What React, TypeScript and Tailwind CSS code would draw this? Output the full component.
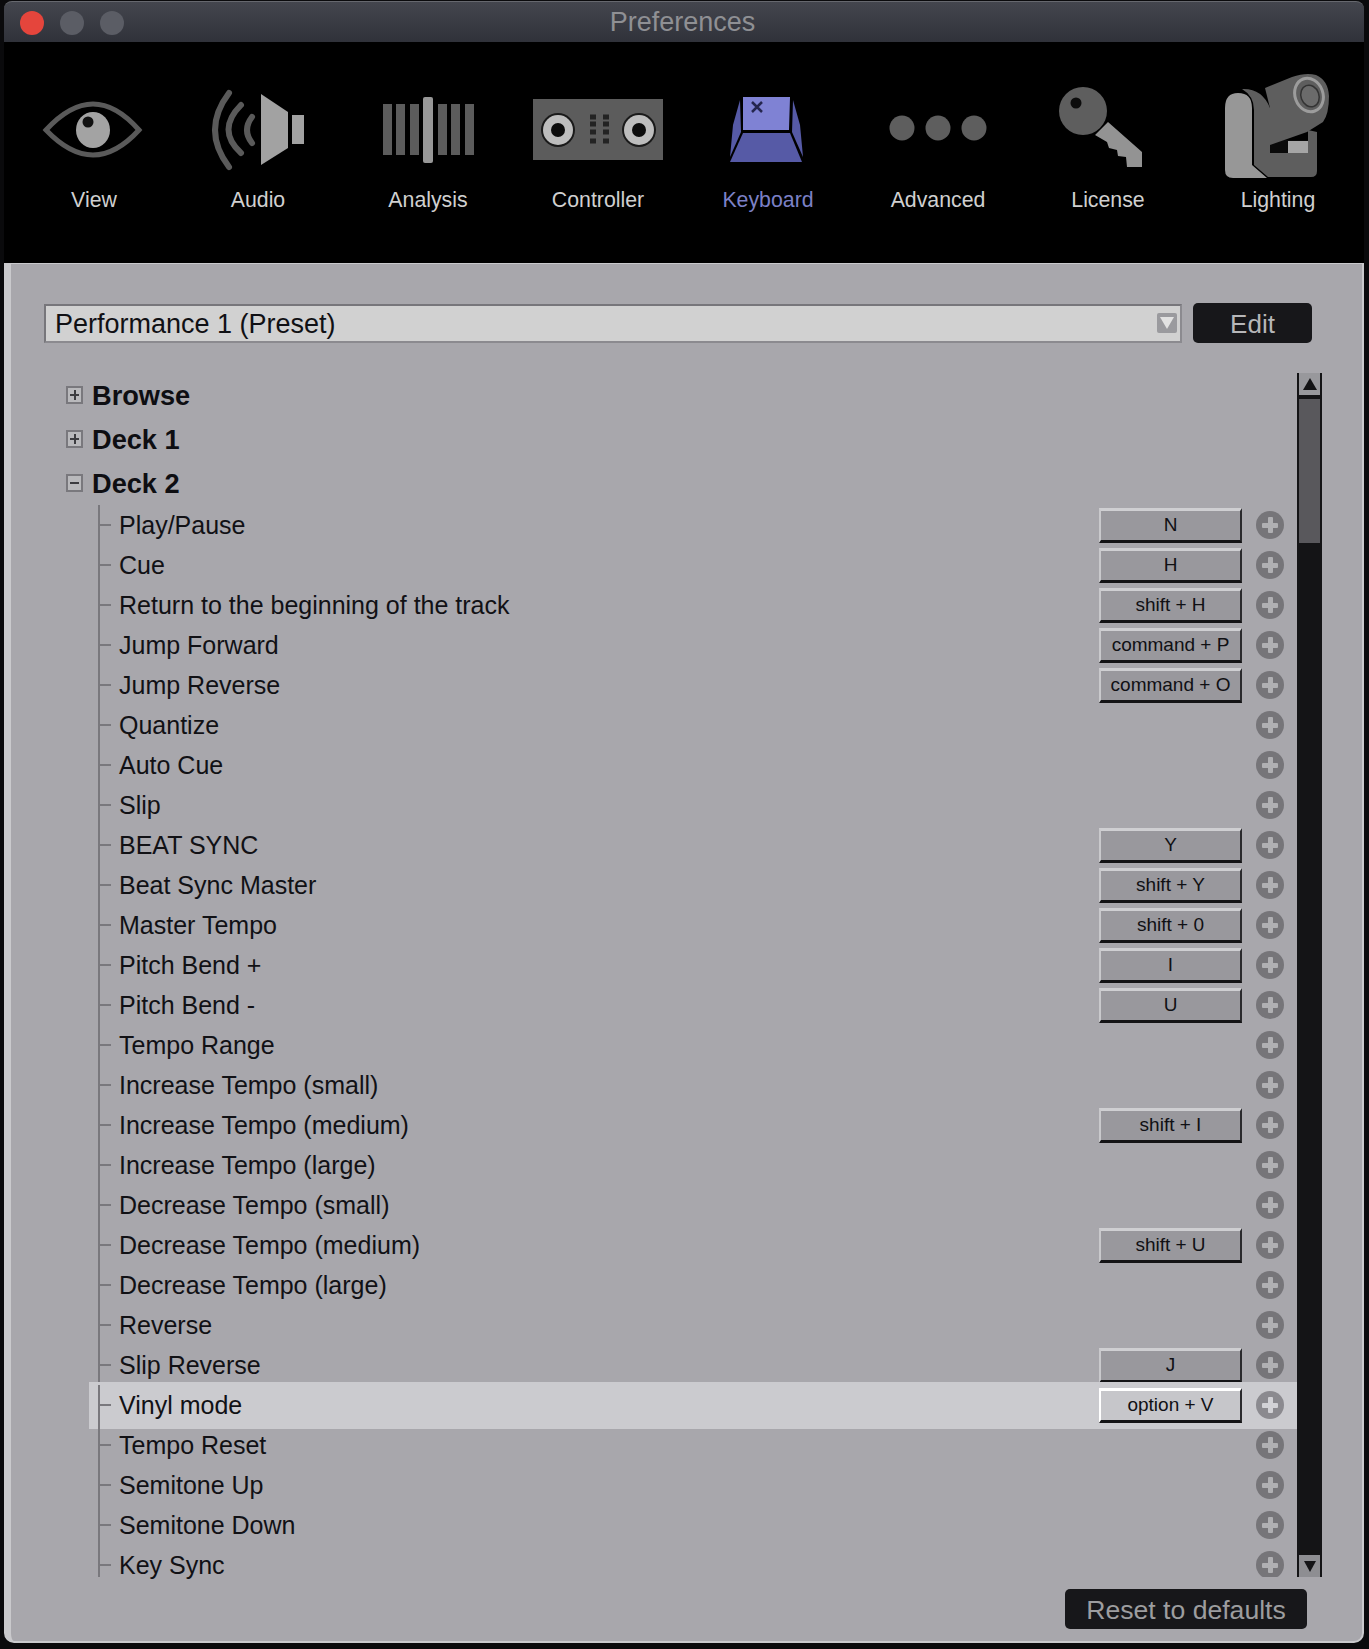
import type { ReactNode } from "react";

interface NavItem {
  label: string;
  active?: boolean;
  icon: ReactNode;
}

const navItems: NavItem[] = [
  {
    label: "View",
    icon: (
      <>
        <path d="M46 130 Q70 104 93 104 Q116 104 139 130 Q116 155 93 155 Q70 155 46 130 Z" fill="none" stroke="#5a5a5a" strokeWidth="5" />
        <ellipse cx="93" cy="130" rx="17" ry="18" fill="#a3a3a3" />
        <circle cx="88" cy="122" r="5.5" fill="#111" />
      </>
    ),
  },
  {
    label: "Audio",
    icon: (
      <>
        <path d="M229 93 Q201 130 229 167" fill="none" stroke="#5a5a5a" strokeWidth="6" strokeLinecap="round" />
        <path d="M241 105 Q216 130 241 153" fill="none" stroke="#5a5a5a" strokeWidth="6" strokeLinecap="round" />
        <path d="M252 117 Q242 130 252 143" fill="none" stroke="#5a5a5a" strokeWidth="6" strokeLinecap="round" />
        <path d="M261 94 L288 112 L288 148 L261 165 Z" fill="#a2a2a2" />
        <rect x="292" y="115" width="12" height="29" fill="#a2a2a2" />
      </>
    ),
  },
  {
    label: "Analysis",
    icon: (
      <>
        {[383, 396, 410, 438, 451, 465].map((x) => (
          <rect key={x} x={x} y="104" width="9" height="51" fill="#5c5c5c" />
        ))}
        <rect x="423" y="97" width="10" height="66" rx="2" fill="#979797" />
      </>
    ),
  },
  {
    label: "Controller",
    icon: (
      <>
        <rect x="533" y="99" width="130" height="61" fill="#5c5c5c" />
        {[558, 639].map((x) => (
          <g key={x}>
            <circle cx={x} cy="130" r="17" fill="#1a1a1a" />
            <circle cx={x} cy="130" r="15" fill="#bdbdbd" />
            <circle cx={x} cy="130" r="7" fill="#0c0c0c" />
          </g>
        ))}
        {[593, 606].map((x) =>
          [117, 124, 132, 141].map((y) => <rect key={`${x}-${y}`} x={x - 3} y={y - 2.5} width="6" height="5" fill="#232323" />),
        )}
      </>
    ),
  },
  {
    label: "Keyboard",
    active: true,
    icon: (
      <>
        <path d="M743 97 H790 L789 130 H743 Z" fill="#7f82d4" />
        <path d="M743 133 H790 L802 162 H730 Z" fill="#565aa6" />
        <path d="M740 100 L741 132 L730 157 L733 125 Z" fill="#565aa6" />
        <path d="M793 100 L792 132 L803 157 L800 125 Z" fill="#565aa6" />
        <path d="M752 102 L762 112 M762 102 L752 112" stroke="#25264f" strokeWidth="2.5" />
      </>
    ),
  },
  {
    label: "Advanced",
    icon: (
      <>
        <circle cx="902" cy="128" r="12.5" fill="#5e5e5e" />
        <circle cx="938" cy="128" r="12.5" fill="#5e5e5e" />
        <circle cx="974" cy="128" r="12.5" fill="#5e5e5e" />
      </>
    ),
  },
  {
    label: "License",
    icon: (
      <>
        <path d="M1108 122 L1142 152 V167 H1127 L1126 157 L1118 156 L1117 150 L1109 148 L1107 142 L1095 135 Z" fill="#939393" />
        <circle cx="1083" cy="111" r="24" fill="#5e5e5e" />
        <circle cx="1076" cy="103" r="5.5" fill="#0c0c0c" />
      </>
    ),
  },
  {
    label: "Lighting",
    icon: (
      <>
        <path d="M1225 108 Q1225 93 1238 93 Q1252 93 1252 108 V165 L1267 178 H1233 Q1225 178 1225 170 Z" fill="#979797" />
        <rect x="1270" y="140" width="38" height="14" fill="#0a0a0a" />
        <rect x="1288" y="141" width="20" height="12" fill="#a5a5a5" />
        <path d="M1242 89 Q1262 88 1270 108 V153 H1308 V130 L1317 132 V171 Q1317 177 1311 177 H1268 L1254 165 V110 Q1254 96 1242 89 Z" fill="#5e5e5e" />
        <path d="M1265 88 L1292 77 Q1306 72 1316 75 Q1328 80 1329 96 Q1329 114 1323 122 L1307 132 L1270 145 V108 Z" fill="#5e5e5e" />
        <ellipse cx="1309" cy="95" rx="14" ry="17" transform="rotate(-20 1309 95)" fill="#5e5e5e" stroke="#9c9c9c" strokeWidth="3" />
        <ellipse cx="1310" cy="96" rx="9" ry="11" transform="rotate(-20 1310 96)" fill="#6b6b6b" stroke="#333" strokeWidth="1.5" />
      </>
    ),
  },
];

const deckRows: { label: string; shortcut?: string; selected?: boolean; clipped?: boolean }[] = [
  { label: "Play/Pause", shortcut: "N" },
  { label: "Cue", shortcut: "H" },
  { label: "Return to the beginning of the track", shortcut: "shift + H" },
  { label: "Jump Forward", shortcut: "command + P" },
  { label: "Jump Reverse", shortcut: "command + O" },
  { label: "Quantize" },
  { label: "Auto Cue" },
  { label: "Slip" },
  { label: "BEAT SYNC", shortcut: "Y" },
  { label: "Beat Sync Master", shortcut: "shift + Y" },
  { label: "Master Tempo", shortcut: "shift + 0" },
  { label: "Pitch Bend +", shortcut: "I" },
  { label: "Pitch Bend -", shortcut: "U" },
  { label: "Tempo Range" },
  { label: "Increase Tempo (small)" },
  { label: "Increase Tempo (medium)", shortcut: "shift + I" },
  { label: "Increase Tempo (large)" },
  { label: "Decrease Tempo (small)" },
  { label: "Decrease Tempo (medium)", shortcut: "shift + U" },
  { label: "Decrease Tempo (large)" },
  { label: "Reverse" },
  { label: "Slip Reverse", shortcut: "J" },
  { label: "Vinyl mode", shortcut: "option + V", selected: true },
  { label: "Tempo Reset" },
  { label: "Semitone Up" },
  { label: "Semitone Down" },
  { label: "Key Sync", clipped: true },
];

function TreeHead({ label, open }: { label: string; open?: boolean }) {
  return (
    <div className="flex h-[44px] items-center">
      <div className="relative h-[18px] w-[17px] border-2 border-[#79787d] bg-[#b9b9bc]">
        <div className="absolute left-[2px] right-[2px] top-[6px] h-[2px] bg-[#3c3c40]" />
        {!open && <div className="absolute bottom-[2px] left-[5.5px] top-[2px] w-[2px] bg-[#3c3c40]" />}
      </div>
      <span className="ml-[9px] pt-[2px] text-[27.2px] font-bold text-[#0e0e12]">{label}</span>
    </div>
  );
}

function PlusButton({ selected }: { selected?: boolean }) {
  return (
    <div className={`relative ml-[14px] mr-[13px] h-[28px] w-[28px] shrink-0 rounded-full ${selected ? "bg-[#8b8a8f]" : "bg-[#767579]"}`}>
      <div className={`absolute left-[6px] top-[11.5px] h-[5px] w-[16px] rounded-[1px] ${selected ? "bg-[#d2d2d6]" : "bg-[#b0b0b3]"}`} />
      <div className={`absolute left-[11.5px] top-[6px] h-[16px] w-[5px] rounded-[1px] ${selected ? "bg-[#d2d2d6]" : "bg-[#b0b0b3]"}`} />
    </div>
  );
}

function Row({ label, shortcut, selected, clipped }: { label: string; shortcut?: string; selected?: boolean; clipped?: boolean }) {
  return (
    <div className="relative flex h-[40px] items-center">
      {selected && <div className="absolute inset-x-0 -bottom-[4px] -top-[3px] bg-[#cbcbcf]" />}
      <div className={`relative ml-[9px] w-[13px] self-start border-l-2 border-[#79787d] ${clipped ? "h-[32px]" : "h-[40px]"}`}>
        <div className="absolute left-0 right-0 top-[19px] h-[2px] bg-[#79787d]" />
      </div>
      <span className="relative ml-[8px] flex-1 text-[25px] leading-[22px] text-[#111115]">{label}</span>
      {shortcut && (
        <div
          className={`relative flex h-[35px] w-[143px] shrink-0 items-center justify-center border-b-[3px] border-l-2 border-r-2 border-t-[3px] border-b-[#141416] border-r-[#2a2a2d] text-[19px] text-[#101014] ${
            selected ? "border-l-white border-t-white bg-[#c6c6ca]" : "border-l-[#c9c9cc] border-t-[#cfcfd2] bg-[#99989d]"
          }`}
        >
          {shortcut}
        </div>
      )}
      {/* the list is cut off at the bottom, so the last plus loses its lower edge */}
      <div className={clipped ? "relative -mt-[2px] h-[26px] overflow-hidden" : "relative"}>
        <PlusButton selected={selected} />
      </div>
    </div>
  );
}

export default function App() {
  return (
    <div className="h-[1649px] w-[1369px] overflow-hidden bg-[#0a0a0c] pl-[4px] pt-px font-['Liberation_Sans',Arial,sans-serif]">
      <div className="flex h-[1642px] w-[1360px] flex-col">
        {/* Title bar */}
        <div className="relative flex h-[41px] shrink-0 items-center justify-center rounded-t-[8px] border-t border-[#66686e] bg-linear-to-b from-[#44464e] to-[#30323a] pr-[3px]">
          <div className="absolute left-[16px] top-[9px] flex gap-[16px]">
            <div className="h-[24px] w-[24px] rounded-full bg-[#e5453c]" />
            <div className="h-[24px] w-[24px] rounded-full bg-[#5b5d65]" />
            <div className="h-[24px] w-[24px] rounded-full bg-[#5b5d65]" />
          </div>
          <span className="text-[27px] text-[#8f9094]">Preferences</span>
        </div>

        {/* Tabs */}
        <div className="grid h-[221px] shrink-0 grid-cols-[repeat(8,170px)] bg-black pt-[23px]">
          {navItems.map((item, i) => (
            <div key={item.label} className="flex flex-col items-center">
              <svg className="blur-[0.5px]" width="170" height="120" viewBox={`${4 + 170 * i} 65 170 120`}>
                {item.icon}
              </svg>
              <span
                className={`flex h-[30px] items-center pt-[2px] text-[21.3px] ${item.label === "View" ? "ml-[10px]" : "-ml-[2px]"} ${
                  item.active ? "text-[#7c80c6]" : "text-[#d0d0d0]"
                }`}
              >
                {item.label}
              </span>
            </div>
          ))}
        </div>

        {/* Panel */}
        <div className="flex flex-1 flex-col rounded-b-[10px] border-b-2 border-l-[7px] border-r-2 border-t border-[#c9c9cc] bg-[#a8a7ac] pt-[39px]">
          <div className="ml-[33px] flex items-center gap-[11px]">
            <div className="flex h-[39px] w-[1138px] items-center justify-between border-2 border-[#77767b] border-b-[#8b8a8f] border-r-[#8b8a8f] bg-[#d1d1d1] pl-[9px] pr-[3px]">
              <span className="pt-[2px] text-[27px] text-[#101014]">Performance 1 (Preset)</span>
              <div className="flex h-[20px] w-[20px] items-center justify-center rounded-[2px] bg-[#9a9a9e]">
                <svg width="14" height="12" viewBox="0 0 14 12">
                  <path d="M0 0 H14 L7 12 Z" fill="#e2e2e2" />
                </svg>
              </div>
            </div>
            <button className="h-[40px] w-[119px] rounded-[5px] bg-[#17171a] pt-[2px] text-[26px] text-[#b6b6b8]">Edit</button>
          </div>

          <div className="mt-[30px] flex h-[1204px]">
            <div className="ml-[55px] w-[1231px]">
              <TreeHead label="Browse" />
              <TreeHead label="Deck 1" />
              <TreeHead label="Deck 2" open />
              <div className="ml-[23px] w-[1208px]">
                {deckRows.map((row) => (
                  <Row key={row.label} {...row} />
                ))}
              </div>
            </div>

            {/* Scrollbar */}
            <div className="flex w-[25px] flex-col bg-[#141416] px-[2px]">
              <div className="flex h-[22px] shrink-0 items-center justify-center bg-[#98989c]">
                <svg width="14" height="12" viewBox="0 0 14 12">
                  <path d="M0 12 H14 L7 0 Z" fill="#141416" />
                </svg>
              </div>
              <div className="mt-[4px] h-[144px] shrink-0 bg-[#59585c]" />
              <div className="flex-1" />
              <div className="flex h-[22px] shrink-0 items-center justify-center bg-[#8e8e92]">
                <svg width="12" height="11" viewBox="0 0 12 11">
                  <path d="M0 0 H12 L6 11 Z" fill="#141416" />
                </svg>
              </div>
            </div>
          </div>

          <div className="mr-[55px] mt-[12px] flex justify-end">
            <button className="h-[40px] w-[242px] rounded-[5px] bg-[#17171a] pt-[2px] text-[26.6px] text-[#9d9d9f]">Reset to defaults</button>
          </div>
        </div>
      </div>
    </div>
  );
}
